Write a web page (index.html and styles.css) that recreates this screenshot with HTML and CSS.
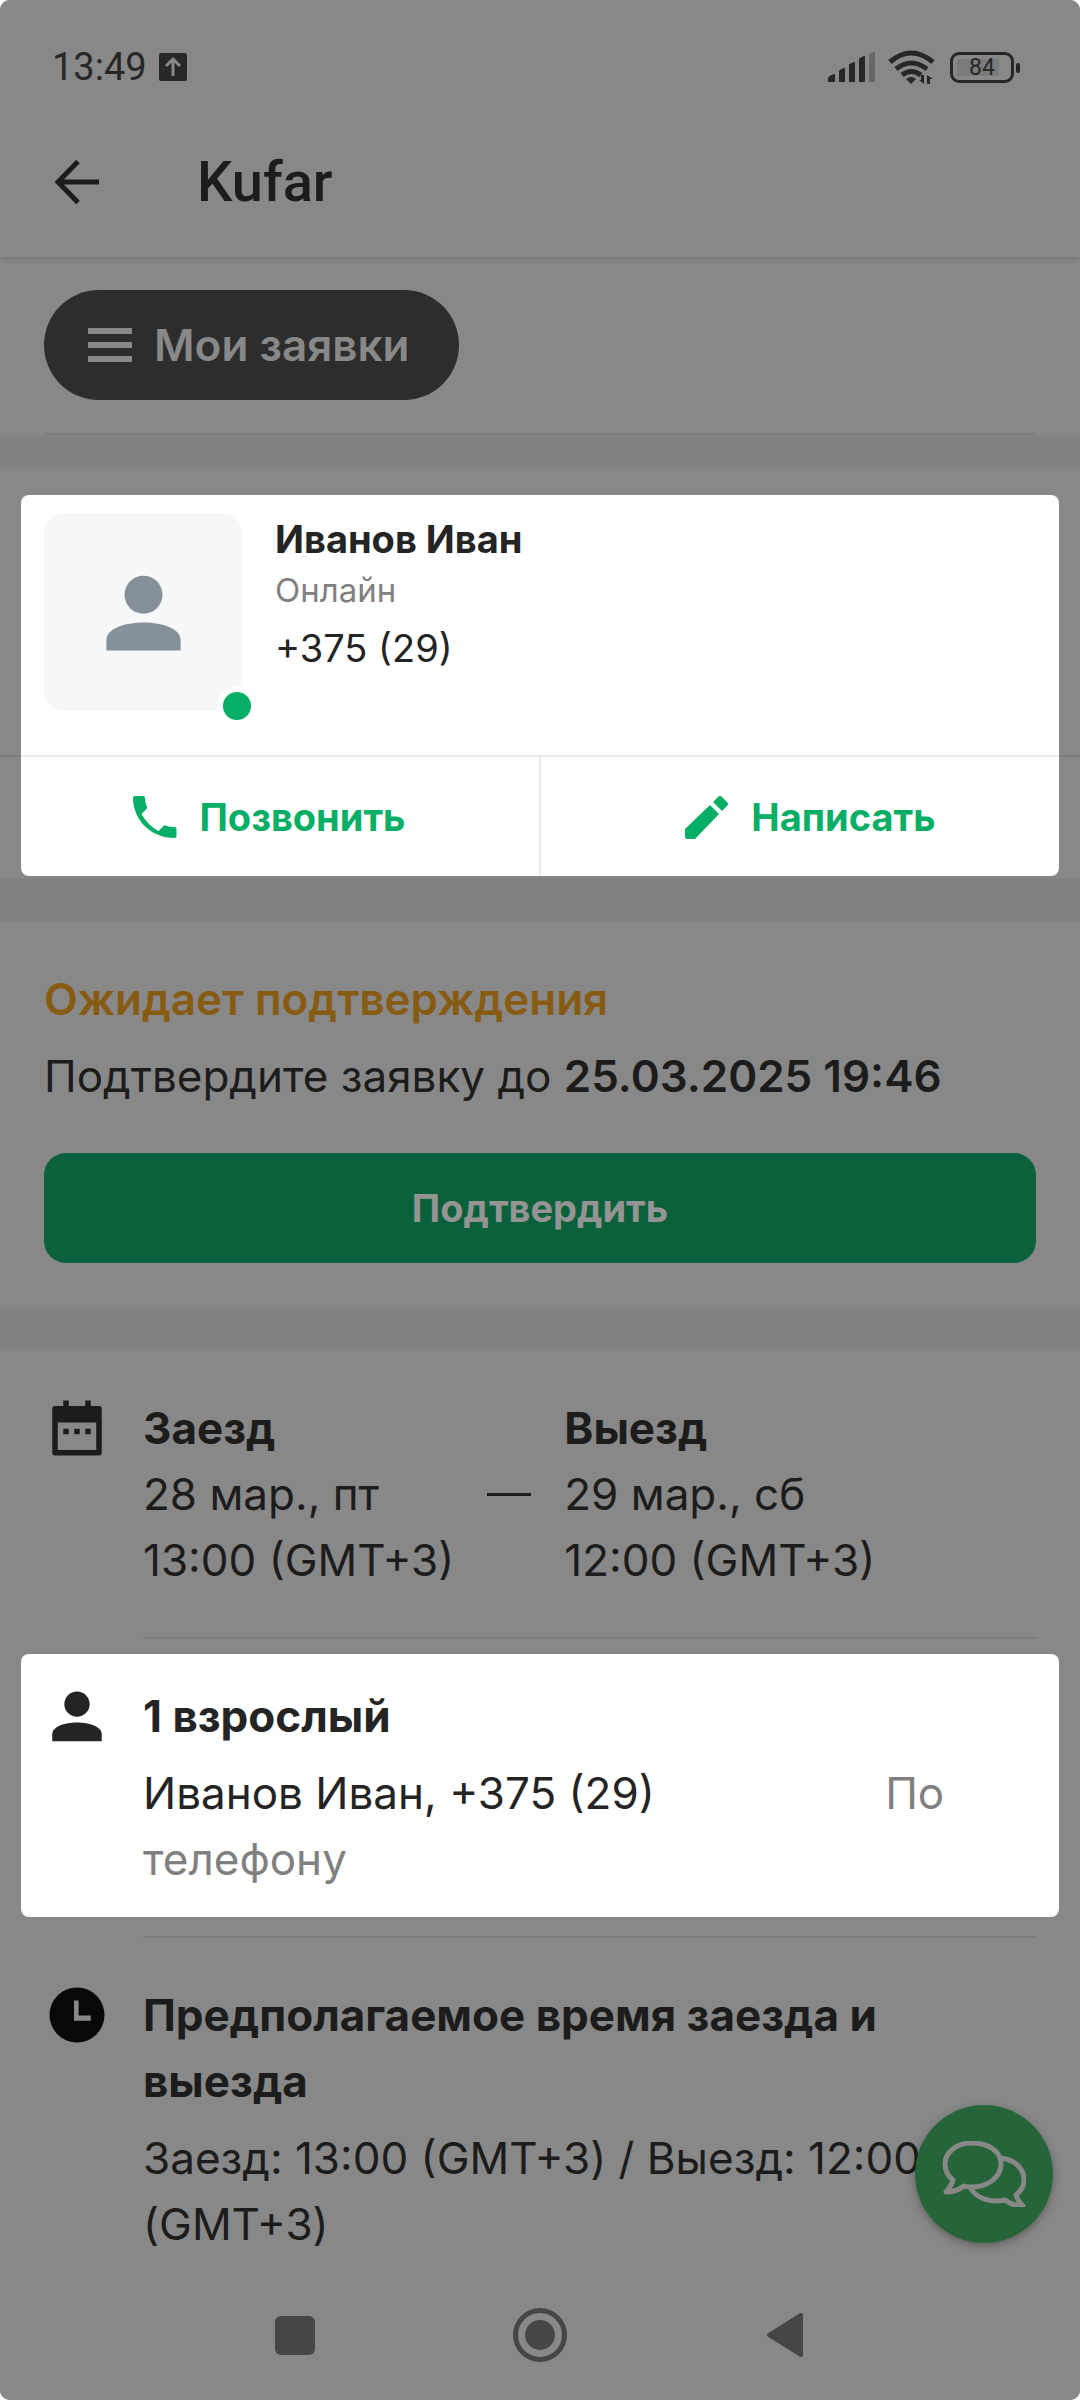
FILE: index.html
```html
<!DOCTYPE html>
<html lang="ru">
<head>
    <meta charset="UTF-8">
    <meta name="viewport" content="width=device-width, initial-scale=1.0">
    <title>Kufar</title>
    <link rel="stylesheet" href="styles.css">
</head>
<body>
    <!-- Общие иконки -->
    <svg class="sprite" aria-hidden="true">
        <symbol id="icon-person" viewBox="0 0 24 24">
            <circle cx="12" cy="7.7" r="4.6"/>
            <path d="M3 21.2v-2.5c0-2.8 4.4-4.3 9-4.3s9 1.5 9 4.3v2.5z"/>
        </symbol>
    </svg>

    <div class="screen">
        <header class="header">
            <div class="status-bar">
                <span>13:49</span>
                <svg class="upload-icon" width="28" height="28" viewBox="0 0 28 28">
                    <rect width="28" height="28" rx="2" fill="#272727"/>
                    <path d="M14 23V6M7 13l7-7 7 7" fill="none" stroke="#888" stroke-width="3"/>
                </svg>
                <div class="status-icons">
                    <svg width="48" height="32" viewBox="0 0 48 32" fill="#272727">
                        <path d="M0 31v-4q1-3 7-4v8zM11 31V20q1-2 6-3v14zM21 31V14q1-2 6-3v20zM31 31V8q1-2 6-3v26z"/>
                        <path d="M41 31V4q1-2 6-3v30z" fill="#666"/>
                    </svg>
                    <svg width="48" height="34" viewBox="0 0 48 34">
                        <g fill="none" stroke="#272727" stroke-width="5">
                            <path d="M2 12q21-18 43 0"/>
                            <path d="M8 19q15-12 31 0"/>
                            <path d="M14 25q9-7 19 0"/>
                        </g>
                        <path d="M18 29q5-4 10 0l-5 5zM36 25v9l-5-4h2v-5zM39 34v-9l6 4h-3v5z" fill="#272727"/>
                    </svg>
                    <div class="battery"><span>84</span></div>
                </div>
            </div>
            <div class="toolbar">
                <button class="back-btn" aria-label="Назад">
                    <svg width="44" height="44" viewBox="0 0 44 44" fill="none" stroke="#1c1c1c" stroke-width="5">
                        <path d="M44 22H4M23 1.5L3 22l20 20.5"/>
                    </svg>
                </button>
                <h1 class="title">Kufar</h1>
            </div>
        </header>

        <div class="menu">
            <button class="menu-btn">
                <svg width="44" height="34" viewBox="0 0 44 34" fill="#888">
                    <path d="M0 0h44v6H0zM0 14h44v6H0zM0 28h44v6H0z"/>
                </svg>
                Мои заявки
            </button>
        </div>

        <!-- Контакт гостя -->
        <section class="contact">
            <div class="contact-info">
                <div class="avatar">
                    <svg width="99" height="99"><use href="#icon-person"/></svg>
                    <span class="online-dot"></span>
                </div>
                <div>
                    <h2 class="contact-name">Иванов Иван</h2>
                    <p class="contact-status">Онлайн</p>
                    <p class="contact-phone">+375 (29)</p>
                </div>
            </div>
            <div class="contact-line"><div></div></div>
            <div class="contact-actions">
                <button class="action-btn">
                    <svg width="44" height="44" viewBox="0 0 44 44" fill="#07ae66">
                        <path d="M2 1h8q2 0 2 2 0 5 2 9 .5 1-.5 2l-5 5q6 11 17 17l5-5q1-1 2-.5 4 1.5 9 1.5 2 0 2 2v7q0 2-2 2C18 43 0 25 0 3q0-2 2-2z"/>
                    </svg>
                    Позвонить
                </button>
                <button class="action-btn">
                    <svg width="44" height="44" viewBox="0 0 44 44" fill="#07ae66">
                        <path d="M0 34L25 10l9 9L10 44H2q-2 0-2-2zM28 7l5-5q2-2 4 0l5 5q2 2 0 4l-5 5z"/>
                    </svg>
                    Написать
                </button>
            </div>
        </section>

        <!-- Статус заявки -->
        <section class="status">
            <h2 class="status-title">Ожидает подтверждения</h2>
            <p>Подтвердите заявку до <b>25.03.2025 19:46</b></p>
            <button class="confirm-btn">Подтвердить</button>
        </section>

        <!-- Детали заявки -->
        <section class="details">
            <div class="row">
                <svg class="row-icon" viewBox="0 0 24 24">
                    <path d="M20 4h-3V2h-2v2H9V2H7v2H4q-1 0-1 1v16q0 1 1 1h16q1 0 1-1V5q0-1-1-1zM19 20H5V10h14z" fill-rule="evenodd"/>
                    <path d="M7 12.300h2v2H7zM11 12.300h2v2h-2zM15 12.300h2v2h-2z"/>
                </svg>
                <div class="dates">
                    <div>
                        <h3>Заезд</h3>
                        <p>28 мар., пт</p>
                        <p>13:00 (GMT+3)</p>
                    </div>
                    <span class="dash"></span>
                    <div>
                        <h3>Выезд</h3>
                        <p>29 мар., сб</p>
                        <p>12:00 (GMT+3)</p>
                    </div>
                </div>
            </div>
            <hr class="divider">
            <div class="row row-active">
                <svg class="row-icon"><use href="#icon-person"/></svg>
                <div class="row-text">
                    <h3>1 взрослый</h3>
                    <p>Иванов Иван, +375 (29)<span class="phone-rest"></span> <span class="muted">По</span> <span class="muted">телефону</span></p>
                </div>
            </div>
            <hr class="divider">
            <div class="row">
                <svg class="row-icon clock-icon" viewBox="0 0 24 24">
                    <circle cx="12" cy="12" r="10"/>
                    <path d="M10.9 6.7h1.7v5.5H17v1.9h-6.1z" fill="#888"/>
                </svg>
                <div class="row-text">
                    <h3>Предполагаемое время заезда и выезда</h3>
                    <p>Заезд: 13:00 (GMT+3) / Выезд: 12:00 (GMT+3)</p>
                </div>
            </div>
        </section>

        <button class="chat-btn" aria-label="Чат">
            <svg width="84" height="66" viewBox="0 0 84 66" fill="none" stroke="#888" stroke-width="5" stroke-linejoin="round">
                <path d="M30 2C15 2 3 11 3 23c0 7 3 12 8 16-1 5-4 8-7 12 7 0 13-2 18-6 3 1 6 1 8 1 16 0 29-10 29-23S46 2 30 2z"/>
                <path d="M58 17c14 1 24 10 24 22 0 6-3 11-8 15 1 4 3 7 7 11-7 0-13-2-18-6-14 3-29-1-35-13"/>
            </svg>
        </button>

        <nav class="nav-bar">
            <button aria-label="Недавние">
                <svg width="54" height="54" viewBox="0 0 54 54" fill="#464646"><rect x="7" y="8" width="40" height="39" rx="6"/></svg>
            </button>
            <button aria-label="Домой">
                <svg width="54" height="54" viewBox="0 0 54 54" fill="#464646">
                    <circle cx="27" cy="27" r="24.5" fill="none" stroke="#464646" stroke-width="5"/>
                    <circle cx="27" cy="27" r="15"/>
                </svg>
            </button>
            <button aria-label="Назад">
                <svg width="54" height="54" viewBox="0 0 54 54" fill="#464646" stroke="#464646" stroke-width="4" stroke-linejoin="round"><path d="M11 27l32-20v40z"/></svg>
            </button>
        </nav>
    </div>
</body>
</html>
```

FILE: styles.css
```css
* {
    box-sizing: border-box;
}
body {
    margin: 0;
    background-color: #fff;
    font-family: Inter, "Noto Sans", sans-serif;
    font-size: 44px;
    line-height: 66px;
    color: #1c1c1c;
}
h1, h2, h3, p {
    margin: 0;
    font-size: inherit;
}
b {
    font-weight: 600;
}
h2, h3 {
    font-weight: 700;
}
button {
    border: none;
    padding: 0;
    background: none;
    font: inherit;
    cursor: pointer;
}
svg {
    display: block;
}
.sprite {
    position: absolute;
    width: 0;
    height: 0;
}
.screen {
    display: flex;
    flex-direction: column;
    min-height: 100vh;
    background-color: #828282;
    border-radius: 10px;
    overflow: hidden;
}

/* Шапка */
.header {
    position: relative;
    padding: 45px 0 42px;
    background-color: #888;
    font-family: Roboto, sans-serif;
    box-shadow: 0 2px 6px rgba(0, 0, 0, 0.15);
}
.status-bar {
    display: flex;
    align-items: center;
    gap: 12px;
    height: 44px;
    padding: 0 66px 0 52px;
    font-size: 38px;
    line-height: 44px;
    color: #272727;
}
.status-icons {
    display: flex;
    align-items: center;
    gap: 12px;
    margin-left: auto;
}
.battery {
    position: relative;
    width: 64px;
    height: 31px;
    margin-left: 2px;
    padding: 4px;
    border: 3px solid #272727;
    border-radius: 9px;
    font-size: 23px;
    line-height: 17px;
    text-align: center;
}
.battery span {
    display: block;
    width: 42px;
    padding-left: 8px;
    background-color: #7b7b7b;
}
.battery::after {
    content: "";
    position: absolute;
    top: 8px;
    right: -9px;
    width: 4px;
    height: 10px;
    border-radius: 2px;
    background-color: #272727;
}
.toolbar {
    display: flex;
    align-items: center;
    gap: 98px;
    margin-top: 60px;
    padding: 0 55px;
}
.title {
    font-size: 56px;
    font-weight: 500;
}

.menu {
    padding: 33px 44px 0;
    background-color: #888;
}
.menu::after {
    content: "";
    display: block;
    height: 2px;
    margin-top: 33px;
    background-color: #7e7e7e;
}
.menu-btn {
    display: flex;
    align-items: center;
    gap: 22px;
    height: 110px;
    padding: 0 50px 0 44px;
    border-radius: 55px;
    background-color: #2d2d2d;
    color: #888;
    font-weight: 600;
}

/* Контакт */
.contact {
    margin-top: 34px;
    padding: 26px 0 2px;
    background-color: #888;
}
.contact-info {
    display: flex;
    gap: 33px;
    margin: 0 21px;
    padding: 18px 23px 44px;
    border-radius: 8px 8px 0 0;
    background-color: #fff;
    font-size: 38px;
    color: #242424;
}
.avatar {
    position: relative;
    display: flex;
    align-items: center;
    justify-content: center;
    width: 198px;
    height: 198px;
    border-radius: 20px;
    background-color: #f6f8f8;
    fill: #86909a;
}
.online-dot {
    position: absolute;
    right: -15px;
    bottom: -15px;
    width: 40px;
    height: 40px;
    border: 6px solid #fff;
    border-radius: 50%;
    background-color: #07ae66;
}
.contact-name {
    line-height: 52px;
}
.contact-status {
    font-size: 33px;
    line-height: 50px;
    color: #808080;
}
.contact-phone {
    line-height: 66px;
}
.contact-line {
    padding: 0 21px;
    background-color: #7c7c7c;
}
.contact-line div {
    height: 2px;
    background-color: #ebebeb;
}
.contact-actions {
    display: flex;
    margin: 0 21px;
    border-radius: 0 0 8px 8px;
    background-color: #fff;
}
.action-btn {
    flex: 1;
    display: flex;
    align-items: center;
    justify-content: center;
    gap: 22px;
    height: 119px;
    padding-right: 21px;
    color: #07ae66;
    font-size: 38px;
    font-weight: 700;
}
.action-btn + .action-btn {
    padding: 0 0 0 21px;
    border-left: 2px solid #ebebeb;
}

/* Статус */
.status {
    margin-top: 44px;
    padding: 44px;
    background-color: #888;
}
.status-title {
    margin-bottom: 11px;
    color: #875b12;
    font-weight: 600;
}
.confirm-btn {
    display: block;
    width: 100%;
    height: 110px;
    margin-top: 44px;
    border-radius: 22px;
    background-color: #0a613c;
    color: #949494;
    font-size: 38px;
    font-weight: 700;
}

/* Детали */
.details {
    flex: 1;
    margin-top: 44px;
    background-color: #888;
}
.row {
    display: flex;
    gap: 33px;
    padding: 44px;
}
.row:last-child {
    padding-bottom: 11px;
}
.row-active {
    margin: 15px 21px 19px;
    padding: 29px 23px 25px;
    border-radius: 8px;
    background-color: #fff;
    color: #242424;
}
.row-icon {
    flex-shrink: 0;
    width: 66px;
    height: 66px;
    fill: currentColor;
}
.clock-icon {
    fill: #080808;
}
.row-text h3 {
    margin-bottom: 11px;
}
.dates {
    display: flex;
    align-items: center;
    gap: 33px;
}
.dash {
    width: 44px;
    height: 3px;
    background-color: #1c1c1c;
}
.divider {
    height: 2px;
    margin: 0 44px 0 143px;
    border: none;
    background-color: #7e7e7e;
}
.phone-rest {
    display: inline-block;
    width: 218px;
}
.muted {
    color: #808080;
}

.chat-btn {
    position: fixed;
    right: 27px;
    bottom: 157px;
    display: flex;
    align-items: center;
    justify-content: center;
    width: 138px;
    height: 138px;
    border-radius: 50%;
    background-color: #266539;
    box-shadow: 0 3px 8px rgba(0, 0, 0, 0.3);
}

.nav-bar {
    display: flex;
    align-items: center;
    justify-content: center;
    gap: 191px;
    height: 130px;
    background-color: #888;
}
```
